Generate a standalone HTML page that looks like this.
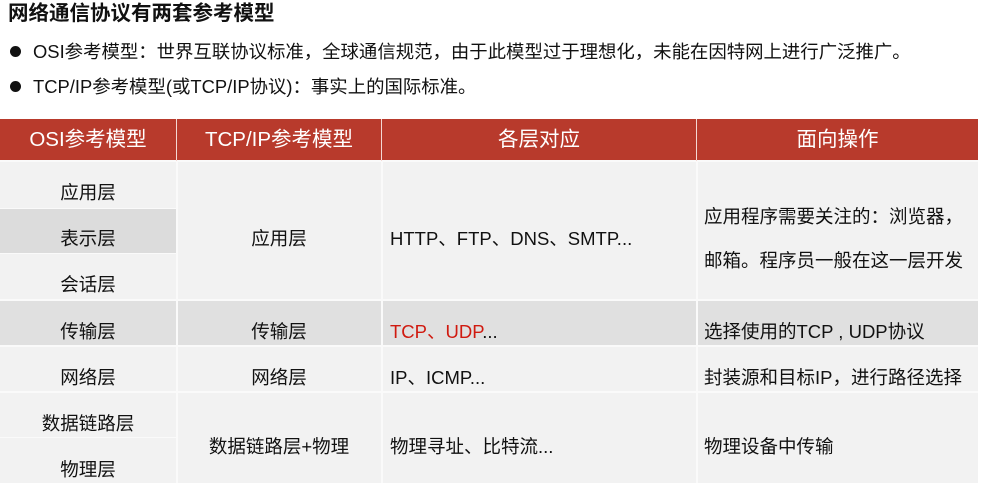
<!DOCTYPE html>
<html><head><meta charset="utf-8"><style>
*{margin:0;padding:0}
body{width:991px;height:483px;background:#fff;position:relative;overflow:hidden;font-family:"Liberation Sans","Noto Sans CJK SC",sans-serif;color:#111}
.a{position:absolute}
.t{position:absolute;font-size:18.5px;line-height:22px;white-space:nowrap}
.c{text-align:center}
.h{color:#fff;font-size:20.5px}
</style></head><body>
<div class="a" style="left:8px;top:1px;font-size:20.5px;font-weight:bold;line-height:26px;">网络通信协议有两套参考模型</div>
<div class="a" style="left:10px;top:46px;width:11px;height:11px;border-radius:50%;background:#111"></div>
<div class="a" style="left:33px;top:39px;font-size:18.4px;line-height:26px;">OSI参考模型：世界互联协议标准，全球通信规范，由于此模型过于理想化，未能在因特网上进行广泛推广。</div>
<div class="a" style="left:10px;top:81px;width:11px;height:11px;border-radius:50%;background:#111"></div>
<div class="a" style="left:33px;top:74px;font-size:18.4px;line-height:26px;">TCP/IP参考模型(或TCP/IP协议)：事实上的国际标准。</div>

<div class="a" style="left:0;top:119px;width:978px;height:41px;background:#b83a2c"></div>
<div class="a" style="left:0;top:161px;width:978px;height:322px;background:#f2f2f2"></div>
<div class="a" style="left:0;top:209px;width:176px;height:44px;background:#dcdcdc"></div>
<div class="a" style="left:0;top:301px;width:978px;height:44px;background:#e0e0e0"></div>
<div class="a" style="left:0;top:160px;width:978px;height:2px;background:#fafafa"></div>
<div class="a" style="left:0;top:208px;width:176px;height:1px;background:#fafafa"></div>
<div class="a" style="left:0;top:253px;width:176px;height:1px;background:#fafafa"></div>
<div class="a" style="left:0;top:299px;width:978px;height:2px;background:#fafafa"></div>
<div class="a" style="left:0;top:345px;width:978px;height:2px;background:#fafafa"></div>
<div class="a" style="left:0;top:391px;width:978px;height:2px;background:#fafafa"></div>
<div class="a" style="left:0;top:437px;width:176px;height:1px;background:#fafafa"></div>
<div class="a" style="left:176px;top:119px;width:1px;height:364px;background:#f4d8d4"></div>
<div class="a" style="left:381px;top:119px;width:1px;height:364px;background:#f4d8d4"></div>
<div class="a" style="left:696px;top:119px;width:1px;height:364px;background:#f4d8d4"></div>
<div class="a" style="left:176px;top:161px;width:2px;height:322px;background:#fafafa"></div>
<div class="a" style="left:381px;top:161px;width:2px;height:322px;background:#fafafa"></div>
<div class="a" style="left:696px;top:161px;width:2px;height:322px;background:#fafafa"></div>

<div class="t c h" style="left:0;width:176px;top:129px">OSI参考模型</div>
<div class="t c h" style="left:177px;width:204px;top:129px">TCP/IP参考模型</div>
<div class="t c h" style="left:382px;width:314px;top:129px">各层对应</div>
<div class="t c h" style="left:697px;width:281px;top:129px">面向操作</div>

<div class="t c" style="left:0;width:176px;top:182px">应用层</div>
<div class="t c" style="left:0;width:176px;top:228px">表示层</div>
<div class="t c" style="left:0;width:176px;top:274px">会话层</div>
<div class="t c" style="left:0;width:176px;top:321px">传输层</div>
<div class="t c" style="left:0;width:176px;top:367px">网络层</div>
<div class="t c" style="left:0;width:176px;top:413px">数据链路层</div>
<div class="t c" style="left:0;width:176px;top:459px">物理层</div>

<div class="t c" style="left:177px;width:204px;top:228px">应用层</div>
<div class="t c" style="left:177px;width:204px;top:321px">传输层</div>
<div class="t c" style="left:177px;width:204px;top:367px">网络层</div>
<div class="t c" style="left:177px;width:204px;top:436px">数据链路层+物理</div>

<div class="t" style="left:390px;top:228px">HTTP、FTP、DNS、SMTP...</div>
<div class="t" style="left:390px;top:321px;color:#d01a10">TCP、UDP<span style="color:#111">...</span></div>
<div class="t" style="left:390px;top:367px">IP、ICMP...</div>
<div class="t" style="left:390px;top:436px">物理寻址、比特流...</div>

<div class="t" style="left:704px;top:206px">应用程序需要关注的：浏览器，</div>
<div class="t" style="left:704px;top:250px">邮箱。程序员一般在这一层开发</div>
<div class="t" style="left:704px;top:321px">选择使用的TCP , UDP协议</div>
<div class="t" style="left:704px;top:367px">封装源和目标IP，进行路径选择</div>
<div class="t" style="left:704px;top:436px">物理设备中传输</div>
</body></html>
